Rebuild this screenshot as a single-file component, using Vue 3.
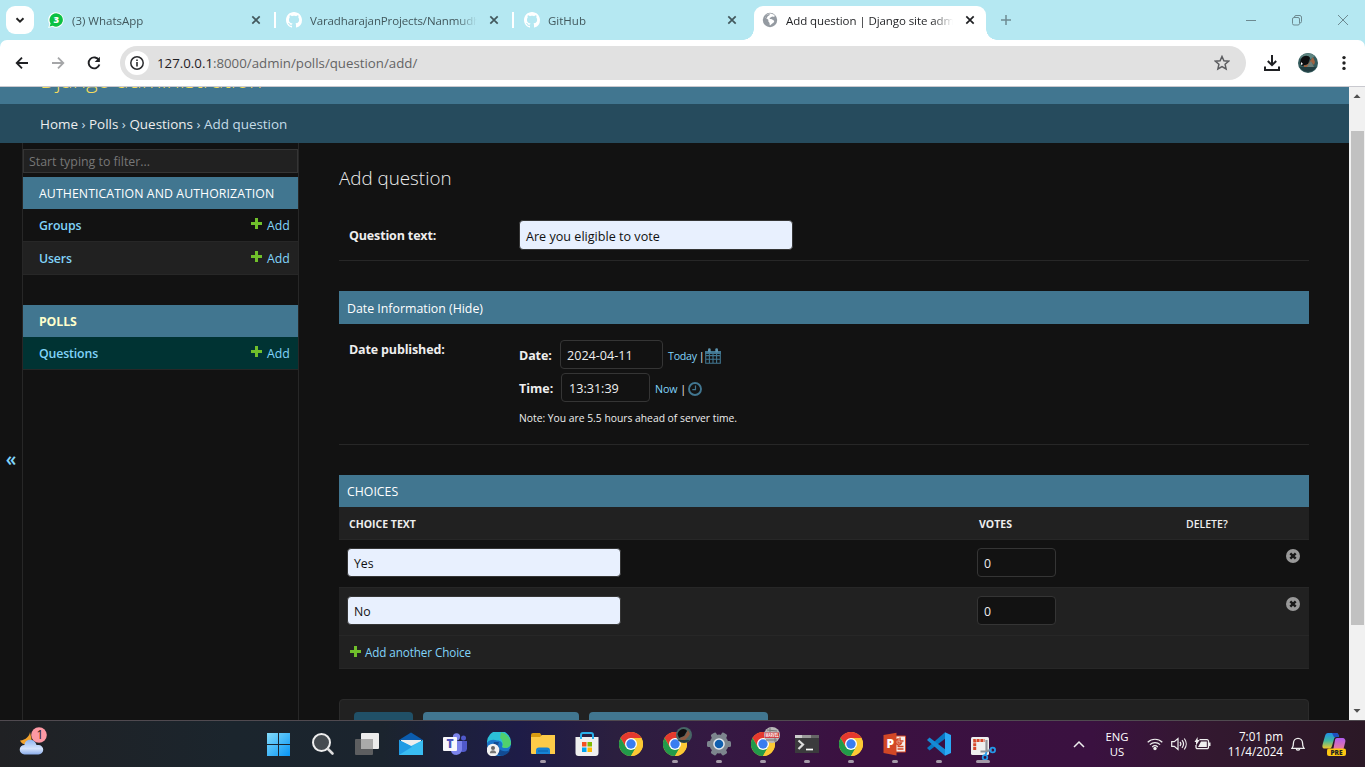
<script setup>
const tabs = [
  { icon: 'whatsapp', title: '(3) WhatsApp' },
  { icon: 'github', title: 'VaradharajanProjects/Nanmudhalvan' },
  { icon: 'github', title: 'GitHub' },
  { icon: 'globe', title: 'Add question | Django site admin', active: true },
]
const apps = [
  { caption: 'Authentication and Authorization', models: ['Groups', 'Users'] },
  { caption: 'Polls', current: true, models: ['Questions'] },
]
const choices = [
  { text: 'Yes', votes: 0 },
  { text: 'No', votes: 0 },
]
const taskbar = [
  { id: 'start' }, { id: 'search' }, { id: 'tasks' }, { id: 'mail' }, { id: 'teams' }, { id: 'edge' },
  { id: 'files', open: true }, { id: 'store' }, { id: 'chrome' },
  { id: 'chrome', badge: 'photo', open: true }, { id: 'settings', open: true },
  { id: 'chrome', badge: 'marvel', open: true }, { id: 'terminal', open: true },
  { id: 'chrome', open: true }, { id: 'powerpoint', open: true }, { id: 'vscode', open: true },
  { id: 'snip', open: true, focused: true },
]
</script>

<template>
  <div class="screen">
    <div class="titlebar">
      <div class="tab-search">
        <svg width="10" height="10" viewBox="0 0 10 10"><path d="M1.500 3.300 5 6.700l3.500-3.400" fill="none" stroke="#222" stroke-width="1.900" /></svg>
      </div>
      <div v-for="(tab, i) in tabs" :key="i" class="tab" :class="{ active: tab.active, divided: i < 2 }">
        <svg v-if="tab.icon === 'whatsapp'" class="favicon" width="16" height="16" viewBox="0 0 16 16">
          <path d="M8 .2a7.700 7.700 0 1 1-3.600 14.500L.2 15.900l1.200-4A7.700 7.700 0 0 1 8 .2z" fill="#fff" />
          <path d="M8.200 1.200a6.700 6.700 0 1 1-3.400 12.500L1.600 14.600l1-3.100A6.700 6.700 0 0 1 8.200 1.200z" fill="#0cc143" />
          <text x="8.200" y="11.400" text-anchor="middle" font-family="Open Sans, sans-serif" font-size="9.500" font-weight="800" fill="#fff">3</text>
        </svg>
        <svg v-else-if="tab.icon === 'github'" class="favicon" width="16" height="16" viewBox="0 0 16 16">
          <path fill="#fff" d="M8 0C3.580 0 0 3.580 0 8c0 3.540 2.290 6.530 5.470 7.590.4.070.55-.17.55-.38 0-.19-.01-.82-.01-1.490-2.010.37-2.530-.49-2.690-.94-.09-.23-.48-.94-.82-1.130-.28-.15-.68-.52-.01-.53.63-.01 1.080.58 1.230.82.72 1.210 1.870.87 2.330.66.070-.52.28-.87.51-1.070-1.780-.2-3.640-.89-3.640-3.950 0-.87.31-1.590.82-2.150-.08-.2-.36-1.020.08-2.120 0 0 .67-.21 2.200.82.64-.18 1.320-.27 2-.27s1.360.09 2 .27c1.530-1.040 2.200-.82 2.200-.82.44 1.100.16 1.920.08 2.120.51.56.82 1.270.82 2.150 0 3.070-1.870 3.750-3.650 3.950.29.25.54.73.54 1.480 0 1.070-.01 1.930-.01 2.200 0 .21.15.46.55.38A8.010 8.010 0 0 0 16 8c0-4.420-3.580-8-8-8z" />
        </svg>
        <svg v-else class="favicon" width="16" height="16" viewBox="0 0 16 16">
          <circle cx="8" cy="8" r="7.200" fill="#949aa1" />
          <path d="M7.200 1.600C9 2 11 1.400 12.300 3.300c-1 1.300-1.300 1.200-2.300 1-1 .2-1.200 1.300-2.500 1.400-.4 1 .2 1.200 1.300 1.200 1.600.1 2 1 3.200 1 .8.800.2 2.300-1 3-.8.600-1.200 1.600-2.200 2.600-.8-.6-.4-1.800-1-2.600-1-.8-1.700-1.600-1.300-2.600-.6-1.200-2.200-1-3.500-2.200C2.800 3.800 5.200 2 7.200 1.600z" fill="#fff" transform="rotate(8 8 8)" />
          <path d="M3 4.500c1.600-2.300 3.300-2.500 5-2.300-.2 1.500-1.700 1.300-2.500 2.400-.6 1-.2 1.700-1.600 1.700z" fill="#949aa1" />
        </svg>
        <span class="tab-title" :class="{ long: i === 1 }">{{ tab.title }}</span>
        <svg class="tab-close" width="10" height="10" viewBox="0 0 10 10"><path d="M1.300 1.300l7.400 7.400M8.700 1.300 1.300 8.700" stroke="currentColor" stroke-width="1.700" /></svg>
      </div>
      <svg class="new-tab" width="12" height="12" viewBox="0 0 12 12"><path d="M6 1v10M1 6h10" stroke="#6e8b92" stroke-width="1.500" /></svg>
      <div class="window-buttons">
        <svg width="12" height="12" viewBox="0 0 12 12"><path d="M1 6.500h10" stroke="#6d8a91" /></svg>
        <svg width="12" height="12" viewBox="0 0 12 12"><g fill="none" stroke="#6d8a91"><rect x="1.500" y="3.500" width="7" height="7.500" rx="1.500" /><path d="M3.500 3.500v-.5A1.500 1.500 0 0 1 5 1.500h4A2 2 0 0 1 10.500 3v4.500a1.500 1.500 0 0 1-1.500 1.500" /></g></svg>
        <svg width="12" height="12" viewBox="0 0 12 12"><path d="M1 1l10 10M11 1 1 11" stroke="#6d8a91" /></svg>
      </div>
    </div>

    <div class="toolbar">
      <svg class="nav" width="16" height="16" viewBox="0 0 16 16"><path d="M14 8H3M8 2.700 2.700 8 8 13.300" fill="none" stroke="#1f2023" stroke-width="1.800" /></svg>
      <svg class="nav" width="16" height="16" viewBox="0 0 16 16"><path d="M2 8h11M8 2.700 13.300 8 8 13.300" fill="none" stroke="#a5a6a8" stroke-width="1.800" /></svg>
      <svg class="nav" width="16" height="16" viewBox="0 0 16 16"><path d="M13 5.300A5.500 5.500 0 1 0 13.400 9.500" fill="none" stroke="#1f2023" stroke-width="1.900" /><path d="M13.900 1.800V7H8.700z" fill="#1f2023" /></svg>
      <div class="omnibox">
        <div class="site-info">
          <svg width="14" height="14" viewBox="0 0 14 14"><circle cx="7" cy="7" r="6.200" fill="none" stroke="#2b2c2e" stroke-width="1.500" /><path d="M7 6v4.500M7 3.500v1.600" stroke="#2b2c2e" stroke-width="1.600" /></svg>
        </div>
        <span class="url"><b>127.0.0.1</b>:8000/admin/polls/question/add/</span>
        <svg width="16" height="16" viewBox="0 0 16 16"><path d="M8 1.500l1.900 4.300 4.700.4-3.500 3.100 1 4.600L8 11.500l-4.100 2.400 1-4.600L1.400 6.200l4.700-.4z" fill="none" stroke="#5c5d60" stroke-width="1.500" /></svg>
      </div>
      <svg class="download" width="16" height="16" viewBox="0 0 16 16"><path d="M8 0v9.500M3.800 6 8 10.200 12.200 6M1 11.500V15h14v-3.500" fill="none" stroke="#1f2023" stroke-width="2" /></svg>
      <svg class="avatar" width="20" height="20" viewBox="0 0 20 20"><circle cx="10" cy="10" r="10" fill="#345a5c" /><path d="M1 6a10 10 0 0 1 16-3l-4 3-4-2z" fill="#5d8480" /><path d="M3 6c2-4 8-4 9-1l-2 6-6 2-2-3z" fill="#0d0d0f" /><path d="M6 12c2 1 5-1 6-4l3-4 2 5-1 3-3-3-3 5-4 1z" fill="#a0613f" /><path d="M10 12l3-4 3 6H9z" fill="#6c7e78" /><path d="M3 9l2 2-2 1z" fill="#fff" /><path d="M1.500 14h17A10 10 0 0 1 1.500 14z" fill="#213d41" /></svg>
      <svg class="menu" width="16" height="16" viewBox="0 0 16 16"><g fill="#222"><circle cx="8" cy="2.600" r="1.700" /><circle cx="8" cy="8" r="1.700" /><circle cx="8" cy="13.400" r="1.700" /></g></svg>
    </div>

    <div class="viewport">
      <div class="page">
        <div class="header"><div class="site-name">Django administration</div></div>
        <div class="breadcrumbs"><span><a>Home</a> › <a>Polls</a> › <a>Questions</a> › Add question</span></div>
        <div class="columns">
          <div class="nav-toggle">«</div>
          <div class="sidebar">
            <div class="filter">Start typing to filter...</div>
            <div v-for="app in apps" :key="app.caption" class="app" :class="{ current: app.current }">
              <div class="app-caption"><span>{{ app.caption }}</span></div>
              <div v-for="m in app.models" :key="m" class="model">
                <span class="model-name">{{ m }}</span>
                <span class="add"><svg width="11" height="11" viewBox="0 0 11 11"><path d="M4 0h3v4h4v3H7v4H4V7H0V4h4z" fill="#70bf2b" /></svg><span>Add</span></span>
              </div>
            </div>
          </div>
          <div class="content">
            <h1><span>Add question</span></h1>
            <div class="form-row question">
              <label class="q-label">Question text:</label>
              <div class="field autofill wide q-value">Are you eligible to vote</div>
            </div>
            <div class="bar date-bar"><span>Date Information (Hide)</span></div>
            <div class="form-row date-row">
              <label class="published">Date published:</label>
              <div>
                <div class="dt date-line">
                  <label>Date:</label>
                  <div class="field date"><span>2024-04-11</span></div>
                  <span class="shortcut"><a>Today</a> |</span>
                  <svg width="16" height="16" viewBox="0 0 16 16"><path d="M.7 4h14.600v11.300H.7zM.7 7.600h14.600M.7 11.300h14.600M4.400 5v10M8 5v10M11.600 5v10" fill="none" stroke="#417690" stroke-width="1.100" /><path d="M0 3h16v3H0z" fill="#417690" /><rect x="3" y=".2" width="2.700" height="4.300" rx="1.300" fill="#5b92ad" /><rect x="10.300" y=".2" width="2.700" height="4.300" rx="1.300" fill="#5b92ad" /></svg>
                </div>
                <div class="dt time-line">
                  <label>Time:</label>
                  <div class="field time"><span>13:31:39</span></div>
                  <span class="shortcut"><a>Now</a> |</span>
                  <svg width="14" height="14" viewBox="0 0 14 14"><circle cx="7" cy="7" r="6" fill="none" stroke="#417690" stroke-width="1.900" /><path d="M7.500 3.500V7.600H4.300" fill="none" stroke="#417690" stroke-width="1.200" /></svg>
                </div>
                <div class="note"><span>Note: You are 5.5 hours ahead of server time.</span></div>
              </div>
            </div>
            <div class="bar choices-bar"><span>CHOICES</span></div>
            <div class="grid head"><span class="c1">CHOICE TEXT</span><span class="c2">VOTES</span><span class="c3">DELETE?</span></div>
            <div v-for="c in choices" :key="c.text" class="grid choice">
              <div class="field autofill wide">{{ c.text }}</div>
              <div class="field votes">{{ c.votes }}</div>
              <svg width="14" height="14" viewBox="0 0 14 14"><circle cx="7" cy="7" r="7" fill="#999" /><path d="M4.300 4.300l5.400 5.400M9.700 4.300 4.300 9.700" stroke="#191919" stroke-width="2.400" /></svg>
            </div>
            <div class="add-another">
              <svg width="11" height="11" viewBox="0 0 11 11"><path d="M4 0h3v4h4v3H7v4H4V7H0V4h4z" fill="#70bf2b" /></svg><span>Add another Choice</span>
            </div>
            <div class="submit-row"><div class="btn save"></div><div class="btn another"></div><div class="btn continue"></div></div>
          </div>
        </div>
      </div>
      <div class="scrollbar">
        <svg width="16" height="17" viewBox="0 0 16 17"><path d="M4.500 11 8 7.200 11.500 11z" fill="#505050" /></svg>
        <div class="thumb"></div>
        <svg class="down" width="16" height="17" viewBox="0 0 16 17"><path d="M4.500 6 8 9.800 11.500 6z" fill="#505050" /></svg>
      </div>
    </div>

    <div class="taskbar">
      <svg class="weather" width="30" height="30" viewBox="0 0 30 30">
        <defs><linearGradient id="cloud" x1="0" y1="0" x2="0" y2="1"><stop offset="0" stop-color="#8fb5f0" /><stop offset=".6" stop-color="#d5e3fb" /><stop offset="1" stop-color="#8aadea" /></linearGradient></defs>
        <path d="M11 5c-.5 4-4 8-10 8.500 2 5 9 5 12 1z" fill="#f3a32c" />
        <path d="M5.500 27.500a4.800 4.800 0 0 1 0-9.600C6 11 16 11 17.500 18h2a4.700 4.700 0 0 1 0 9.500z" fill="url(#cloud)" />
        <circle cx="20" cy="8" r="7.800" fill="#fd99a4" />
        <text x="21" y="12.400" text-anchor="middle" font-family="Open Sans, sans-serif" font-size="12" fill="#1c1c1c">1</text>
      </svg>
      <div class="apps">
        <div v-for="(app, i) in taskbar" :key="i" class="task">
          <svg v-if="app.id === 'start'" width="24" height="24" viewBox="0 0 24 24"><defs><linearGradient id="win" x1="0" y1="0" x2="1" y2="1"><stop offset="0" stop-color="#83dbfa" /><stop offset="1" stop-color="#0795f5" /></linearGradient></defs><path d="M0 1h11v11H0zM12 1h11v11H12zM0 13h11v11H0zM12 13h11v11H12z" fill="url(#win)" /></svg>
          <svg v-else-if="app.id === 'search'" width="24" height="24" viewBox="0 0 24 24"><circle cx="10.500" cy="10.500" r="8.500" fill="#454b50" stroke="#eee" stroke-width="2" /><path d="M17 17l4.500 4.500" stroke="#ddd" stroke-width="2.600" stroke-linecap="round" /></svg>
          <svg v-else-if="app.id === 'tasks'" width="24" height="24" viewBox="0 0 24 24"><rect x="6" y="1" width="18" height="16" rx="1" fill="#ececec" /><rect y="7" width="18" height="16" rx="1" fill="#5d5e60" /><rect x="6" y="7" width="12" height="10" fill="#aaa" /></svg>
          <svg v-else-if="app.id === 'mail'" width="24" height="24" viewBox="0 0 24 24"><path d="M0 8 12 .5 24 8z" fill="#0b5cae" /><path d="M2 8h20v11H2z" fill="#eee" /><path d="M0 8l12 6L24 8v15H0z" fill="#36baf0" /><path d="M0 8l12 6L24 23H0z" fill="#219be4" /><path d="M0 23 24 8v15z" fill="#39bdf2" /></svg>
          <svg v-else-if="app.id === 'teams'" width="24" height="24" viewBox="0 0 24 24"><circle cx="13.500" cy="4.800" r="3.600" fill="#7b83eb" /><circle cx="20.500" cy="6" r="2.500" fill="#5059c9" /><path d="M17 9h7v7.500c0 4-5 4.500-7 2z" fill="#5059c9" /><path d="M8 9h11v8c0 7.500-11 8-11 1z" fill="#7b83eb" /><rect y="5" width="14" height="14" rx="1" fill="#f7f7fb" /><text x="7" y="16.200" text-anchor="middle" font-family="Open Sans, sans-serif" font-size="12" font-weight="800" fill="#4b53bc">T</text></svg>
          <svg v-else-if="app.id === 'edge'" width="24" height="24" viewBox="0 0 24 24"><circle cx="12" cy="12" r="12" fill="#1a75c9" /><path d="M0 11A12 12 0 0 1 24 10c.5 6-6 7-9 5 2-3-1-7-5-6.500C6 7 2 8 0 11z" fill="#2bbfd8" /><path d="M14 .3A12 12 0 0 1 24 11c-.5 5-6 6-9 4 2-3 0-8-2-9z" fill="#50d06d" /><path d="M7 10c-3 6 1 13 8 14 4-1 7-3 8-6-8 4-14-2-11-8z" fill="#124b93" /><circle cx="6" cy="18" r="6.300" fill="#f2f2f2" /><circle cx="6" cy="16" r="2" fill="#666" /><path d="M2.800 21.300c0-4 6.400-4 6.400 0z" fill="#777" /></svg>
          <svg v-else-if="app.id === 'files'" width="24" height="24" viewBox="0 0 24 24"><path d="M0 3a2 2 0 0 1 2-2h7l2 3v8H0z" fill="#d99b11" /><path d="M0 5h9l2-2h13v19H1a1 1 0 0 1-1-1z" fill="#fdcb48" /><path d="M5 22v-3.500a3 3 0 0 1 3-3h8a3 3 0 0 1 3 3V22z" fill="#1683d4" /><path d="M7 19h10" stroke="#0b5ea8" /></svg>
          <svg v-else-if="app.id === 'store'" width="24" height="24" viewBox="0 0 24 24"><path d="M6 7V3a2 2 0 0 1 2-2h8a2 2 0 0 1 2 2v4" fill="none" stroke="#2ab0ea" stroke-width="2" /><path d="M.5 5h23v16a3 3 0 0 1-3 3h-17a3 3 0 0 1-3-3z" fill="#efefef" /><path d="M6 4v3M18 4v3" stroke="#2ab0ea" stroke-width="2" /><path d="M7 10h4.500v4.500H7z" fill="#f25022" /><path d="M12.500 10H17v4.500h-4.500z" fill="#7fba00" /><path d="M7 15.500h4.500V20H7z" fill="#00a4ef" /><path d="M12.500 15.500H17V20h-4.500z" fill="#ffb900" /></svg>
          <svg v-else-if="app.id === 'chrome'" width="24" height="24" viewBox="0 0 24 24"><circle cx="12" cy="12" r="12" fill="#fcc934" /><path d="M1.600 6a12 12 0 0 1 20.800 0H12l-5.200 9z" fill="#e5392e" /><path d="M1.600 6A12 12 0 0 0 12 24l5.200-9H6.800z" fill="#229a4a" /><path d="M12 6h10.400A12 12 0 0 1 12 24l5.200-9z" fill="#fcc934" /><circle cx="12" cy="12" r="6" fill="#fff" /><circle cx="12" cy="12" r="4.700" fill="#3a7df0" /></svg>
          <svg v-else-if="app.id === 'settings'" width="24" height="24" viewBox="0 0 24 24"><g fill="#7d868e"><circle cx="12" cy="12" r="9.500" /><rect v-for="a in [0, 60, 120]" :key="a" x="9" y="0" width="6" height="24" rx="1.500" :transform="`rotate(${a + 30} 12 12)`" /></g><circle cx="12" cy="12" r="5.800" fill="#e3e8ee" /><circle cx="12" cy="12" r="4.300" fill="#0f5fae" /></svg>
          <svg v-else-if="app.id === 'terminal'" width="24" height="24" viewBox="0 0 24 24"><path d="M0 3h24v18H0z" fill="#3b3b3d" /><path d="M0 3h7v3H0z" fill="#ccc" /><path d="M7 3h9v3H7z" fill="#999" /><path d="M16 3h8v3h-8z" fill="#666" /><path d="M3.500 8.500 8 12.500l-4.500 4.500" fill="none" stroke="#ddd" stroke-width="2.200" /><path d="M11 17.500h7" stroke="#fff" stroke-width="1.700" /></svg>
          <svg v-else-if="app.id === 'powerpoint'" width="24" height="24" viewBox="0 0 24 24"><path d="M12 4h10.500v16H12z" fill="#f6eeea" stroke="#d24726" /><path d="M15 7a3 3 0 1 0 3.500 4H15zM17 5.500V9h3.500M14.500 14.500h6M14.500 17h6" fill="none" stroke="#d24726" stroke-width="1.400" /><path d="M.5 3 13.500.8v22.600L.5 21z" fill="#d24726" /><text x="7.200" y="16.300" text-anchor="middle" font-family="Open Sans, sans-serif" font-size="12" font-weight="800" fill="#fff">P</text></svg>
          <svg v-else-if="app.id === 'vscode'" width="24" height="24" viewBox="0 0 24 24"><path d="M18 6.500V.2L24 3v18l-6 2.800v-6.300z" fill="#2aaaf5" /><path d="M0 16 18 .2v6.500L2.500 18.500z" fill="#0879c4" /><path d="M0 8l18 15.800v-6.500L2.500 5.500z" fill="#168bd6" /></svg>
          <svg v-else class="snip" width="24" height="24" viewBox="0 0 24 24"><rect y="5" width="18" height="18" rx="1.500" fill="#efefef" /><path d="M3.700 18V8.500h10" fill="none" stroke="#d7482b" stroke-width="3" stroke-dasharray="3 .8" /><path d="M15.500 8v12M9.500 19.500h6l5-2" fill="none" stroke="#8f9499" stroke-width="2.200" /><path d="M15.500 20l-1 3" stroke="#2499e8" stroke-width="1.800" /><circle cx="21.700" cy="18" r="2.400" fill="none" stroke="#2499e8" stroke-width="1.700" /><circle cx="14" cy="25.500" r="2.300" fill="none" stroke="#2499e8" stroke-width="1.700" /></svg>
          <svg v-if="app.badge" class="badge" :class="app.badge" width="16" height="16" viewBox="0 0 16 16">
            <template v-if="app.badge === 'photo'"><circle cx="8" cy="8" r="8" fill="#476666" /><path d="M1.500 7C3 1 10 1 11 4L8 9l-5 2z" fill="#0e0e10" /><path d="M4 11l5-2 3-6 2 4-2 3-3 3-4 1z" fill="#8d5a42" /><path d="M2 13h12a8 8 0 0 1-12 0z" fill="#223c3f" /></template>
            <template v-else><circle cx="8" cy="8" r="8" fill="#b9b9b9" /><path d="M3 3l10 1M2 13h11M6 1v4M11 11v4" stroke="#777" /><rect x="1" y="5.500" width="14" height="5.500" fill="#d23f46" /><text x="8" y="10" text-anchor="middle" font-family="Open Sans, sans-serif" font-size="5" font-weight="700" fill="#fff" textLength="13" lengthAdjust="spacingAndGlyphs">MARVEL</text></template>
          </svg>
          <i v-if="app.open" :class="{ focused: app.focused }"></i>
        </div>
      </div>
      <div class="tray">
        <svg class="chevron" width="12" height="8" viewBox="0 0 12 8"><path d="M1 7l5-5 5 5" fill="none" stroke="#eee" stroke-width="1.500" /></svg>
        <div class="lang">ENG<br />US</div>
        <svg class="wifi" width="16" height="14" viewBox="0 0 16 14"><g fill="none" stroke="#eee" stroke-width="1.200"><path d="M.7 5.200a10.500 10.500 0 0 1 14.600 0M2.900 7.600a7.400 7.400 0 0 1 10.200 0M5.200 10a4.200 4.200 0 0 1 5.600 0" /></g><circle cx="8" cy="11.500" r="1.700" fill="#eee" /></svg>
        <svg class="volume" width="17" height="14" viewBox="0 0 17 14"><g fill="none" stroke="#eee" stroke-width="1.200"><path d="M.7 4.700h2.600L7 1.500v11L3.300 9.300H.7zM9 5a3 3 0 0 1 0 4M11 3.200a6 6 0 0 1 0 7.600M13.300 1.500a9 9 0 0 1 0 11" /></g></svg>
        <svg class="battery" width="17" height="14" viewBox="0 0 17 14"><path d="M5.500 2.700H13a1.500 1.500 0 0 1 1.500 1.500v6a1.500 1.500 0 0 1-1.500 1.500H3.500A1.500 1.500 0 0 1 2 10.200V8" fill="none" stroke="#eee" stroke-width="1.300" /><path d="M4 10 7 4.500h5.800V10zM15 5.500h1.500v3.400H15zM3.600 0v3h2L2 8.500V5H.5z" fill="#eee" /></svg>
        <div class="clock">7:01 pm<br />11/4/2024</div>
        <svg class="bell" width="14" height="16" viewBox="0 0 14 16"><path d="M1 12.300c1.500-2 1.500-3 1.500-5.500a4.500 4.500 0 0 1 9 0c0 2.500 0 3.500 1.500 5.500zM5.300 13a1.800 1.800 0 0 0 3.400 0" fill="none" stroke="#eee" stroke-width="1.300" /></svg>
        <svg class="copilot" width="24" height="24" viewBox="0 0 24 24"><defs><linearGradient id="cp1" x1="0" y1="0" x2="0" y2="1"><stop offset="0" stop-color="#1f8fe8" /><stop offset=".5" stop-color="#3fb8a0" /><stop offset="1" stop-color="#f0c62a" /></linearGradient><linearGradient id="cp2" x1="0" y1="0" x2="0" y2="1"><stop offset="0" stop-color="#b15cf0" /><stop offset="1" stop-color="#f5808a" /></linearGradient></defs><path d="M6 1h8c2 0 2.500 1.500 3 4h-3c-1 0-1.700.7-2 2l-2 7c-.5 2-1.500 2.500-3 2.500H3c-3 0-3-2-2-5.500l2-7c.5-2 1.500-3 3-3z" fill="url(#cp1)" /><path d="M10 1h4c2 0 2.500 1.500 3 4h-5z" fill="#1e4fc0" /><path d="M15 6h5c3 0 4 2 3 5l-2 8H11l2-11c.3-1.300 1-2 2-2z" fill="url(#cp2)" /><rect x="5" y="16.500" width="19" height="7.500" rx="2" fill="#fdc713" /><text x="14.500" y="22.700" text-anchor="middle" font-family="Open Sans, sans-serif" font-size="6.500" font-weight="800" fill="#222">PRE</text></svg>
      </div>
    </div>
  </div>
</template>

<style>
body { margin: 0; overflow: hidden; }
</style>

<style scoped>
.screen { width: 1365px; height: 767px; overflow: hidden; display: flex; flex-direction: column; background: #121212; font-family: "Open Sans", "Noto Sans", sans-serif; font-size: 12.300px; white-space: nowrap; }
.screen * { box-sizing: border-box; }
svg { display: block; flex: none; }

.titlebar { height: 40px; flex: none; display: flex; background: #b5e8f2; position: relative; z-index: 1; }
.tab-search { width: 28px; height: 28px; margin: 6px 4px 0 6px; border-radius: 9px; background: #fff; display: grid; place-items: center; }
.tab { position: relative; width: 238px; height: 40px; display: flex; align-items: center; padding-left: 10px; color: #42585d; font-size: 11.500px; }
.favicon { margin-right: 8px; }
.tab-title { width: 167px; overflow: hidden; line-height: 20px; padding-top: 1px; mask-image: linear-gradient(90deg, #000 88%, transparent); }
.tab-title.long { letter-spacing: -.12px; }
.tab-close { margin-left: 12px; }
.divided::after { content: ""; position: absolute; right: 0; top: 12px; width: 2px; height: 16px; background: #fff; }
.tab.active { color: #1f2023; }
.tab.active .tab-title { letter-spacing: -.08px; }
.tab.active::before { content: ""; position: absolute; z-index: 0; left: 2px; top: 6px; width: 232px; height: 34px; border-radius: 9px 9px 0 0; background: #fff; }
.tab.active::after { content: ""; position: absolute; left: -9px; bottom: 0; width: 254px; height: 11px; background: radial-gradient(circle at 0 0, transparent 10.500px, #fff 11px) left / 11px 11px no-repeat, radial-gradient(circle at 100% 0, transparent 10.500px, #fff 11px) right / 11px 11px no-repeat; }
.tab.active > * { position: relative; z-index: 1; }
.new-tab { margin: 14px 0 0 10px; }
.window-buttons { margin: 14px 16px 0 auto; display: flex; gap: 34px; }

.toolbar { height: 47px; flex: none; display: flex; align-items: center; background: #fff; border-bottom: 1px solid #c9c9cf; border-radius: 7px 7px 0 0; box-shadow: 0 -8px 0 #b5e8f2; padding: 0 13px 0 14px; clip-path: inset(0); }
.nav { margin-right: 20px; }
.omnibox { width: 1126px; height: 34px; margin-left: -2px; border-radius: 17px; background: #e1e1e1; display: flex; align-items: center; padding: 0 16px 0 5px; }
.site-info { width: 24px; height: 24px; border-radius: 12px; background: #fff; display: grid; place-items: center; }
.url { flex: 1; margin-left: 8px; font-size: 13.270px; color: #646464; }
.url b { font-weight: 400; color: #1f2023; }
.download { margin-left: 18px; }
.avatar { margin-left: 18px; }
.menu { margin-left: 18px; }

.viewport { height: 633px; display: flex; overflow: hidden; }
.page { width: 1349px; height: 633px; overflow: hidden; display: flex; flex-direction: column; color: #eee; }
.header { height: 17px; flex: none; background: #417690; overflow: hidden; }
.site-name { margin: -15px 0 0 40px; font-size: 22.400px; line-height: 16px; font-weight: 300; color: #f5dd5d; }
.breadcrumbs { height: 39px; flex: none; padding: 0 40px; line-height: 40px; font-size: 13.450px; color: #c4dce8; background: #264b5d; }
.breadcrumbs a { color: #eee; }
.columns { flex: 1; display: flex; min-height: 0; }
.nav-toggle { width: 22px; display: flex; align-items: center; justify-content: center; padding-bottom: 6px; margin-top: 60px; font-size: 19px; font-weight: 600; color: #81d4fa; }
.sidebar { width: 277px; border: solid #272727; border-width: 0 1px; padding-top: 6px; }
.filter { height: 24px; border: 1px solid #353535; background: #212121; color: #777; padding: 1px 0 0 5px; line-height: 22px; font-size: 12.370px; margin-bottom: 4px; }
.app { margin-bottom: 30px; }
.app-caption { height: 32px; background: #417690; padding: 1px 0 0 16px; line-height: 32px; text-transform: uppercase; color: #fff; letter-spacing: .08px; }
.model { height: 33px; border-bottom: 1px solid #272727; display: flex; align-items: center; justify-content: space-between; padding: 0 8px 0 16px; color: #81d4fa; }
.model:nth-child(odd) { background: #212121; }
.model-name { font-weight: 600; letter-spacing: -.13px; }
.current .model { background: #003333; }
.current .app-caption { font-weight: 700; color: #ffffcc; letter-spacing: -.1px; }
.add { display: flex; align-items: center; gap: 5px; }
.add span { letter-spacing: .1px; }
.add svg { margin-top: -4px; }

.content { width: 970px; margin-left: 40px; display: flex; flex-direction: column; }
h1 { margin: 20px 0 0; height: 30px; font-size: 18.800px; line-height: 30px; font-weight: 300; color: #eee; }
label { font-weight: 700; font-size: 12.500px; }
.form-row { display: flex; border-bottom: 1px solid #272727; padding-left: 10px; flex: none; }
.form-row > label { width: 170px; letter-spacing: -.15px; }
.question { height: 68px; padding-top: 27px; margin-bottom: 30px; }
.question > label { line-height: 32px; }
.field { height: 30px; flex: none; border: 1px solid #353535; border-radius: 4px; background: #121212; padding: 1px 6px 0; line-height: 28px; }
.wide { width: 274px; }
.autofill { background: #e8f0fe; color: #111; }
.q-value { font-size: 12.600px; line-height: 30px; }
.bar { height: 32px; flex: none; background: #417690; color: #fff; padding-left: 8px; line-height: 34px; }
.date-bar { height: 33px; line-height: 35px; font-size: 12.350px; }
.date-row { height: 121px; padding-top: 16px; margin-bottom: 30px; }
.date-row > label { line-height: 20px; }
.dt { display: flex; align-items: center; height: 33px; }
.date-line { margin-top: -2px; }
.dt .field { height: 29px; line-height: 27px; font-size: 12.600px; }
.dt label { width: 41px; padding-top: 1px; letter-spacing: -.1px; }
.time-line label { width: 42px; letter-spacing: 0; }
.date { width: 103px; }
.time { width: 89px; padding-left: 7px; }
.shortcut { margin: 3px 3px 0 5px; font-size: 10.700px; }
.date-line .shortcut { letter-spacing: -.25px; word-spacing: -.8px; margin-right: 1px; }
.time-line .shortcut { letter-spacing: -.1px; margin-right: 2px; }
.shortcut a { color: #81d4fa; }
.dt svg { margin-top: 2px; }
.time-line svg { margin-top: 3px; }
.note { font-size: 10.320px; line-height: 16px; margin-top: 6px; }
.grid { display: grid; grid-template-columns: 630px 207px 1fr; border-bottom: 1px solid #272727; flex: none; }
.head { height: 33px; background: #212121; line-height: 35px; padding-left: 10px; font-size: 10.500px; font-weight: 700; }
.c3 { font-weight: 600; }
.choice { height: 48px; padding: 8px 9px 0 8px; }
.choice + .choice { background: #212121; }
.choice .field { width: 274px; height: 29px; line-height: 28px; }
.choice .votes { width: 79px; }
.choice svg { justify-self: end; margin-top: 1px; }
.add-another { height: 33px; flex: none; background: #212121; border-bottom: 1px solid #272727; display: flex; align-items: center; gap: 4px; padding-left: 11px; color: #81d4fa; font-size: 11.700px; letter-spacing: -.1px; }
.add-another svg { margin-top: -2px; }
.submit-row { height: 60px; flex: none; margin-top: 30px; border: 1px solid #2b2b2b; border-radius: 4px; background: #212121; padding: 12px 14px; display: flex; gap: 10px; }
.btn { height: 35px; border-radius: 4px; background: #417690; }
.save { width: 59px; background: #205067; }
.another { width: 156px; }
.continue { width: 179px; }

.scrollbar { width: 16px; height: 633px; background: #f1f1f1; display: flex; flex-direction: column; align-items: center; }
.thumb { width: 13px; height: 494px; margin: 27px 0 0 1px; background: #c1c1c1; }
.down { margin-top: auto; }

.taskbar { height: 47px; position: relative; z-index: 1; display: flex; border-top: 1px solid #504a50; background: linear-gradient(90deg, #202124 0, #1b252d 17%, #1b242e 28%, #1e1c47 38%, #2b1f3f 45%, #341942 52%, #3b1141 62%, #3a1140 80%, #331830 88%, #2b1826 100%); }
.weather { margin: 6px 0 0 19px; }
.apps { display: flex; margin-left: 208px; }
.task { position: relative; width: 44px; height: 46px; display: flex; justify-content: center; padding-top: 11px; }
.task i { position: absolute; left: 19px; bottom: 4px; width: 6px; height: 3px; border-radius: 2px; background: #a49aa8; }
.task i.focused { left: 15px; width: 14px; }
.task .badge { position: absolute; left: 23px; top: 6px; }
.snip { overflow: visible; }
.tray { display: flex; align-items: center; color: #fff; font-size: 11.300px; line-height: 15px; margin-left: 68px; }
.lang { width: 40px; margin-left: 12px; text-align: center; }
.wifi { margin-left: 10px; }
.volume { margin-left: 8px; }
.battery { margin-left: 6px; }
.clock { width: 70px; margin-left: 2px; text-align: right; font-size: 11.700px; }
.bell { margin-left: 8px; }
.copilot { margin-left: 17px; }
</style>
